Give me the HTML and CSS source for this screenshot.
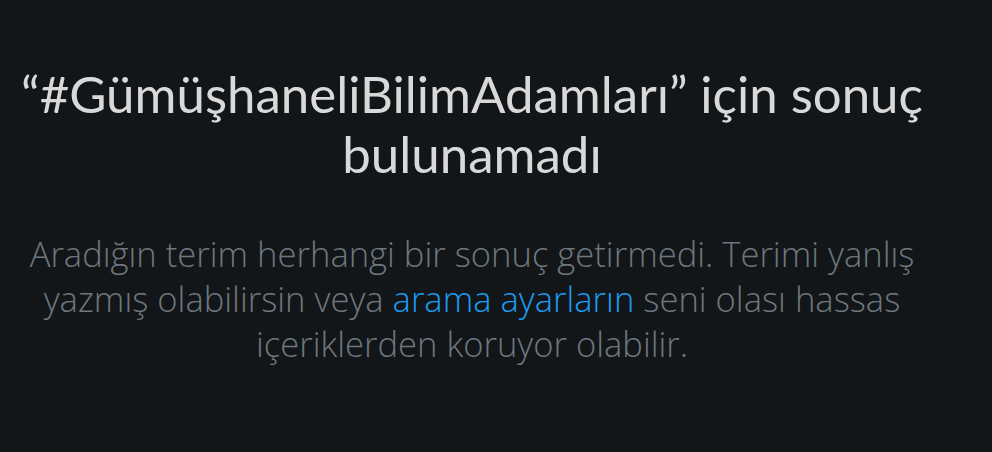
FILE: index.html
```html
<!DOCTYPE html>
<html lang="tr">
<head>
<meta charset="utf-8">
<link rel="stylesheet" href="styles.css">
</head>
<body>
<main class="empty">
  <h1 class="empty-title">“#GümüşhaneliBilimAdamları” için sonuç bulunamadı</h1>
  <p class="empty-text">Aradığın terim herhangi bir sonuç getirmedi. Terimi yanlış yazmış olabilirsin veya <a class="empty-link" href="#">arama ayarların</a> seni olası hassas içeriklerden koruyor olabilir.</p>
</main>
</body>
</html>
```
FILE: styles.css
```css
html, body {
  margin: 0;
  padding: 0;
  background: #131619;
  height: 100%;
}
.empty {
  display: flex;
  flex-direction: column;
  align-items: center;
  width: 944px;
  padding: 64px 0 0;
  text-align: center;
}
.empty-title {
  margin: 0;
  font-family: Lato, sans-serif;
  font-size: 51px;
  font-weight: 400;
  line-height: 60px;
  color: #d9d9d9;
  max-width: 940px;
}
.empty-text {
  margin: 47px 0 0;
  font-family: "Open Sans", sans-serif;
  font-size: 34.6px;
  font-weight: 300;
  line-height: 45px;
  color: #6e767d;
  max-width: 910px;
}
.empty-link {
  color: #1d9bf0;
  text-decoration: none;
}
```
